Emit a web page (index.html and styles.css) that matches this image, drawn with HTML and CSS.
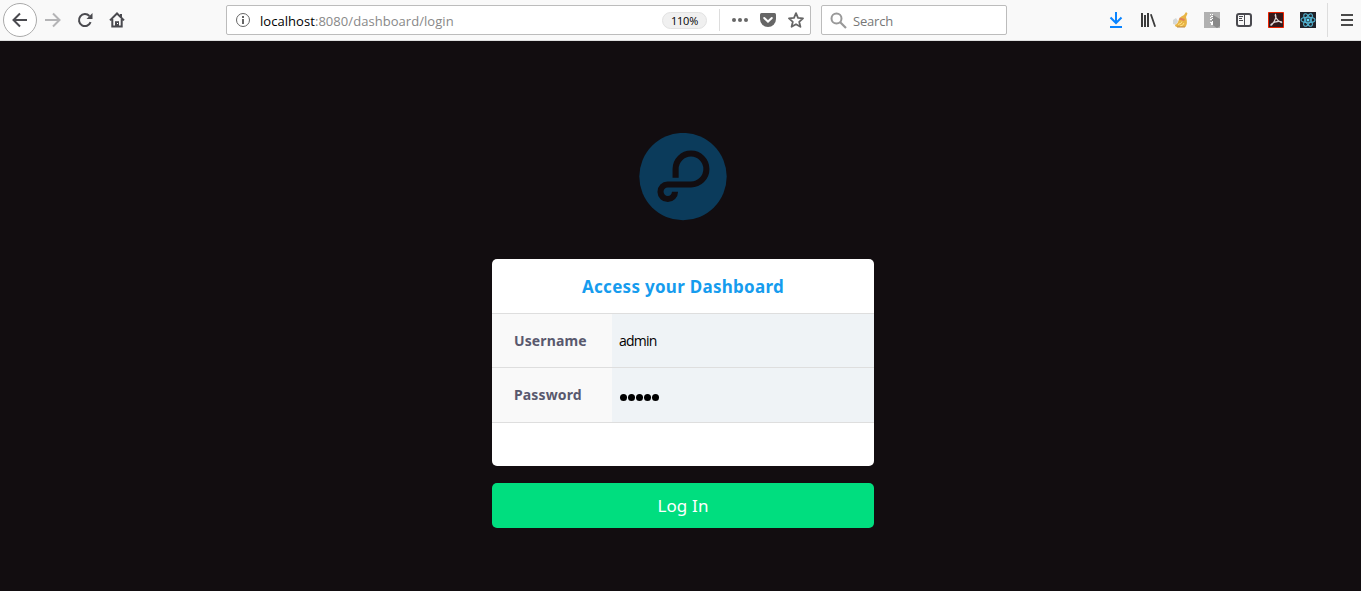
FILE: index.html
```
<!DOCTYPE html>
<html lang="en">
<head>
<meta charset="utf-8">
<title>Dashboard login</title>
<link rel="stylesheet" href="styles.css">
</head>
<body>
<header class="toolbar">
  <nav class="nav-buttons">
    <span class="back"><svg width="16" height="16" viewBox="0 0 16 16"><path d="M15 8H1.5M8 1.5 1.5 8 8 14.5" class="line"/></svg></span>
    <svg class="forward" width="16" height="16" viewBox="0 0 16 16"><path d="M0 8h14M8 1.5 14.5 8 8 14.5" class="line"/></svg>
    <svg class="reload" width="16" height="16" viewBox="0 0 16 16"><path d="M13.6 10.2A6 6 0 1 1 12.4 4" class="line"/><path d="M15.5 1v6h-6z" fill="currentColor"/></svg>
    <svg class="home" width="16" height="16" viewBox="0 0 16 16"><path d="M1 8.4 8 1.5l7 6.9M3.3 7v7.6h9.4V7" class="line"/><path d="M6 14V9.2h4V14z" fill="currentColor"/><path d="M11 2h2v4l-2-2z" fill="currentColor"/><path d="M8 11h1v1H8z" fill="#fff"/></svg>
  </nav>
  <div class="address">
    <svg class="info" width="16" height="16" viewBox="0 0 16 16"><circle cx="8" cy="8" r="6.5" fill="none" stroke="currentColor"/><path d="M7 4h2v2H7zM7 7h2v5H7z" fill="currentColor"/></svg>
    <span class="url"><b>localhost</b>:8080/dashboard/login</span>
    <span class="percent">110%</span>
    <span class="divider"></span>
    <svg class="dots" width="16" height="16" viewBox="0 0 16 16"><g fill="currentColor"><circle cx="2" cy="8" r="2"/><circle cx="8" cy="8" r="2"/><circle cx="14" cy="8" r="2"/></g></svg>
    <svg class="pocket" width="16" height="16" viewBox="0 0 16 16"><path d="M1.5 1h13Q16 1 16 2.500V7a8 8 0 0 1-16 0V2.500Q0 1 1.500 1z" fill="currentColor"/><path d="M4.200 6 8 9.600 11.800 6" fill="none" stroke="#fff" stroke-width="2" stroke-linecap="round"/></svg>
    <svg class="star" width="16" height="16" viewBox="0 0 16 16"><path d="M8 1.200l2 4.700 5 .5-3.800 3.400 1.200 5L8 12.200l-4.400 2.600 1.200-5L1 6.400l5-.5z" fill="none" stroke="currentColor" stroke-width="1.800" stroke-linejoin="round"/></svg>
  </div>
  <div class="search">
    <svg width="17" height="17" viewBox="0 0 17 17"><circle cx="6.500" cy="6.500" r="5" fill="none" stroke="currentColor" stroke-width="2"/><path d="M10 10l6 6" stroke="currentColor" stroke-width="2.200"/></svg>
    <span>Search</span>
  </div>
  <div class="extensions">
    <svg width="16" height="16" viewBox="0 0 16 16"><path d="M8 0v11M2.500 5.500 8 11l5.500-5.500M2 15h12" fill="none" stroke="#0a84ff" stroke-width="2"/></svg>
    <svg width="16" height="16" viewBox="0 0 16 16"><path d="M1 1h2v14H1zM4 3h2v12H4zM7 1h2v14H7zM10 2.500l1.700-.6L16 14.400l-1.700.6z" fill="#3c3c3c"/></svg>
    <svg width="16" height="16" viewBox="0 0 16 16"><path d="M1 8l3-2 2 3-2 4-3-1z" fill="#d5d8d8"/><path d="M14 0l1.500 1.500L14 5q2 6-.5 10H6q-3 0-3-2 3-1 4-6 2-3 5-4z" fill="#e8b445"/><path d="M7.500 6.500 12.500 8" stroke="#e08058" stroke-width="2"/><path d="M6 12.500q4-1 4-3M8 14q3 0 4-3" fill="none" stroke="#ffe28a"/><path d="M5 15h8" stroke="#bd8a46"/></svg>
    <svg width="16" height="16" viewBox="0 0 16 16"><path d="M0 0h16v16H0z" fill="#b1b1b1"/><path d="M9 3l7 4v7l-3 2-6-4z" fill="#898989"/><path d="M6 2h1v1H6zM8 2h1v1H8zM7 4h2v1H7zM6 5h1v1H6zM8 6h1v1H8zM6 7h2v1H6zM8 9h1v1H8zM6 10h3v1H6zM7 11h2v2H7z" fill="#fff"/></svg>
    <svg width="16" height="16" viewBox="0 0 16 16"><rect x="1" y="2" width="14" height="12" rx="2" fill="none" stroke="#4a4a4f" stroke-width="2"/><path d="M8.500 2v12" stroke="#4a4a4f"/><path d="M3 4.500h4M3 6.500h3M3 8.500h4" stroke="#4a4a4f"/></svg>
    <svg width="16" height="16" viewBox="0 0 16 16"><path d="M.5.5h15v15H.5z" fill="#35191b" stroke="#ed2100"/><path d="M7.500 2.500c-1 1 1 6 5.500 8 1 .5 1-.8 0-1-4-.6-8 1-10 3-.6 1 .5 1 1 .3C6 10 9 5 7.500 2.500z" fill="none" stroke="#ddd5d5" stroke-width="1.100"/></svg>
    <svg width="16" height="16" viewBox="0 0 16 16"><path d="M0 0h16v16H0z" fill="#20232a"/><g fill="none" stroke="#53b5d3" stroke-width="1.100"><ellipse cx="8" cy="8" rx="7" ry="2.700"/><ellipse cx="8" cy="8" rx="7" ry="2.700" transform="rotate(60 8 8)"/><ellipse cx="8" cy="8" rx="7" ry="2.700" transform="rotate(120 8 8)"/></g><circle cx="8" cy="8" r="1.500" fill="#61dafb"/></svg>
  </div>
  <div class="menu"><svg width="12" height="12" viewBox="0 0 12 12"><path d="M0 1h12M0 6h12M0 11h12" stroke="#4a4a4a" stroke-width="2"/></svg></div>
</header>
<main class="page">
  <svg class="logo" width="88" height="88" viewBox="9 8 88 88"><circle cx="53" cy="51.600" r="43.700" fill="#0b3b5b"/><path d="M45.600 52.700V44A15.400 15.500 0 1 1 61 59.500H37.600a7.250 7.250 0 1 0 7.400 7.200" fill="none" stroke="#120d10" stroke-width="6.100"/></svg>
  <form class="login">
    <section class="card">
      <h1>Access your Dashboard</h1>
      <label class="row"><span class="label">Username</span><span class="field">admin</span></label>
      <label class="row password"><span class="label">Password</span><span class="field"><i></i><i></i><i></i><i></i><i></i></span></label>
    </section>
    <button type="button" class="submit">Log In</button>
  </form>
</main>
</body>
</html>
```
FILE: styles.css
```
* { box-sizing: border-box; }
body { margin: 0; height: 591px; overflow: hidden; background: #120d10; font-family: "Noto Sans", sans-serif; }
svg { display: block; flex: none; }
.toolbar { display: flex; align-items: center; height: 41px; background: #f9f9f9; border-bottom: 1px solid #dedede; color: #4a4a4f; }
.line { fill: none; stroke: currentColor; stroke-width: 2; }
.nav-buttons { display: flex; align-items: center; width: 226px; padding-left: 3px; }
.back { display: flex; align-items: center; justify-content: center; width: 34px; height: 34px; border: 1px solid #aaa; border-radius: 50%; background: #fff; }
.forward { margin-left: 8px; color: #b4b4b6; }
.reload, .home { margin-left: 16px; }
.address, .search { display: flex; align-items: center; height: 30px; border: 1px solid #bcbcbc; border-radius: 2px; background: #fff; font-family: "Open Sans", sans-serif; font-size: 13px; }
.address { width: 585px; padding-left: 8px; color: #666; }
.url { width: 402px; margin-left: 9px; padding-top: 2px; color: #888; white-space: nowrap; letter-spacing: .05px; }
.url b { font-weight: 400; color: #000; }
.percent { display: grid; place-items: center; width: 45px; height: 17px; border: 1px solid #e2e2e2; border-radius: 9px; background: #f0f0f0; color: #000; font-size: 11px; letter-spacing: -.2px; }
.divider { width: 1px; height: 22px; margin: 0 12px; background: #ddd; }
.pocket, .star { margin-left: 12px; }
.search { width: 186px; margin-left: 10px; padding-left: 8px; gap: 6px; color: #999; }
.search span { padding-top: 2px; color: #777; letter-spacing: -.2px; }
.extensions { display: flex; gap: 16px; margin-left: 101px; }
.menu { display: flex; align-items: center; justify-content: flex-end; width: 26px; height: 34px; margin-left: 11px; border-left: 1px solid #ddd; }
.page { display: flex; flex-direction: column; align-items: center; padding: 92px 0 0 5px; }
.login { width: 382px; margin-top: 38px; }
.card { height: 207px; overflow: hidden; border-radius: 5px; background: #fff; }
h1 { margin: 0; height: 54px; font-size: 17px; line-height: 56px; letter-spacing: .28px; text-align: center; color: #169cee; }
.row { display: flex; height: 54px; border-top: 1px solid #dedede; line-height: 53px; }
.row.password { height: 56px; border-bottom: 1px solid #dedede; }
.label { width: 120px; padding-left: 22px; background: #f9f9f9; color: #59596e; font-size: 14px; font-weight: 700; letter-spacing: .13px; }
.field { display: flex; align-items: center; flex: 1; padding-left: 7px; background: #eff3f6; color: #000; font-family: "Open Sans", sans-serif; font-size: 14px; letter-spacing: -.8px; }
.password .field { padding-left: 8px; }
.field i { width: 7px; height: 7px; margin: 4px 1px 0 0; border-radius: 50%; background: #000; }
.submit { display: block; width: 100%; height: 45px; margin-top: 17px; padding: 0; border: 0; border-radius: 5px; background: #00de7f; color: #fff; font: 17px "Noto Sans", sans-serif; letter-spacing: .15px; }
```
